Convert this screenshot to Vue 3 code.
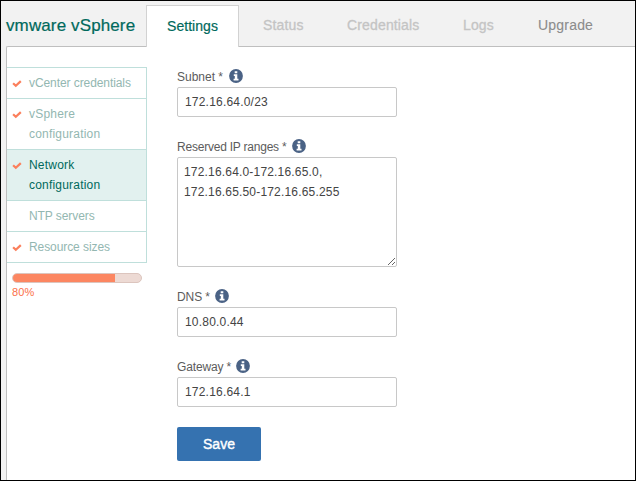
<script setup>
import { ref } from 'vue'

const tabs = [
  { label: 'Settings', state: 'active', key: 'settings' },
  { label: 'Status', state: 'disabled', key: 'status' },
  { label: 'Credentials', state: 'disabled', key: 'credentials' },
  { label: 'Logs', state: 'disabled', key: 'logs' },
  { label: 'Upgrade', state: 'enabled', key: 'upgrade' }
]

const steps = [
  { label: 'vCenter credentials', done: true, tight: true },
  { label: 'vSphere configuration', done: true },
  { label: 'Network configuration', done: true, active: true },
  { label: 'NTP servers', done: false, tight: true },
  { label: 'Resource sizes', done: true, tight: true }
]

const fields = ref([
  { id: 'subnet', label: 'Subnet *', value: '172.16.64.0/23' },
  { id: 'reserved', label: 'Reserved IP ranges *', value: '172.16.64.0-172.16.65.0,\n172.16.65.50-172.16.65.255', multiline: true },
  { id: 'dns', label: 'DNS *', value: '10.80.0.44' },
  { id: 'gateway', label: 'Gateway *', value: '172.16.64.1' }
])

const progress = 80
</script>

<template>
  <div class="frame">
    <header class="topbar">
      <h1 class="brand">vmware vSphere</h1>
      <nav class="tabs">
        <a v-for="tab in tabs" :key="tab.key" class="tab" :class="[tab.state, tab.key]">{{ tab.label }}</a>
      </nav>
    </header>
    <main class="panel">
      <aside class="sidebar">
        <ul class="steps">
          <li v-for="step in steps" :key="step.label" class="step" :class="{ current: step.active }">
            <span class="mark">
              <svg v-if="step.done" width="10" height="8" viewBox="0 0 10 8">
                <path d="M1.1 3.2 3.8 5.8 8.8 1.1" fill="none" stroke="#fb7f5c" stroke-width="2.2" />
              </svg>
            </span>
            <span class="step-label" :class="{ tight: step.tight }">{{ step.label }}</span>
          </li>
        </ul>
        <div class="progress">
          <div class="fill" :style="{ width: progress + '%' }"></div>
        </div>
        <div class="percent">{{ progress }}%</div>
      </aside>
      <form class="form" @submit.prevent>
        <div v-for="field in fields" :key="field.id" class="group">
          <label class="label" :for="field.id">
            <span class="label-text" :class="field.id">{{ field.label }}</span>
            <svg class="info" width="14" height="14" viewBox="0 0 14 14">
              <circle cx="7" cy="7" r="6.9" fill="#4a6285" />
              <path d="M5.7 2.2h2.6v2H5.7zM4.8 5.2h3.5v4.5h1.2v1.8H4.6V9.7h1.2V7H4.8z" fill="#fff" />
            </svg>
          </label>
          <textarea v-if="field.multiline" :id="field.id" v-model="field.value" class="control area" spellcheck="false"></textarea>
          <input v-else :id="field.id" v-model="field.value" class="control" type="text" />
        </div>
        <button class="save" type="submit">Save</button>
      </form>
    </main>
  </div>
</template>

<style>
body {
  margin: 0;
  overflow: hidden;
}
</style>

<style scoped>
* {
  box-sizing: border-box;
}
.frame {
  display: flex;
  flex-direction: column;
  width: 636px;
  height: 481px;
  border: 1px solid #000;
  background: #f2f2f2;
  font-family: "Liberation Sans", Arial, sans-serif;
  color: #5c5c5c;
}
.topbar {
  display: flex;
  flex: none;
  height: 46px;
  padding: 4px 0 0 5px;
}
.brand {
  width: 140px;
  margin: 0;
  padding-top: 10px;
  font-size: 17px;
  font-weight: 400;
  line-height: 22px;
  letter-spacing: 0.12px;
  color: #00695c;
  -webkit-text-stroke: 0.2px #00695c;
  white-space: nowrap;
}
.tabs {
  display: flex;
}
.tab {
  height: 41px;
  padding: 10px 20px 0 24px;
  font-size: 14px;
  line-height: 20px;
  letter-spacing: 0.15px;
  white-space: nowrap;
}
.tab.active {
  position: relative;
  z-index: 1;
  width: 93px;
  height: 42px;
  padding: 10px 0 0 20px;
  border: 1px solid #d2d2d2;
  border-bottom: 0;
  background: #fff;
  color: #00695c;
  letter-spacing: 0.05px;
  -webkit-text-stroke: 0.2px #00695c;
}
.tab.disabled {
  color: #c4c4c4;
  -webkit-text-stroke: 0.3px #c4c4c4;
}
.tab.enabled {
  color: #8c8c8c;
  letter-spacing: 0.2px;
  -webkit-text-stroke: 0.1px #8c8c8c;
}
.tab.status { width: 84px; }
.tab.credentials { width: 116px; }
.tab.logs { width: 75px; }
.panel {
  display: flex;
  flex: 1;
  min-height: 0;
  margin: -1px 0 0 5px;
  border-top: 1px solid #bfbfbf;
  border-left: 1px solid #bfbfbf;
  border-top-left-radius: 2px;
  background: #fff;
}
.sidebar {
  width: 140px;
  padding-top: 20px;
}
.steps {
  margin: 0;
  padding: 0;
  list-style: none;
  border-right: 1px solid #bfdfdb;
  border-bottom: 1px solid #bfdfdb;
}
.step {
  display: flex;
  padding: 5px 0;
  border-top: 1px solid #bfdfdb;
  font-size: 12px;
  line-height: 20px;
  color: #93b7b1;
}
.step.current {
  background: #e2f1ef;
  color: #00695c;
}
.mark {
  display: flex;
  flex: none;
  width: 22px;
  height: 20px;
  padding: 7px 0 0 5px;
}
.step-label {
  width: 112px;
  letter-spacing: 0.2px;
}
.step-label.tight {
  letter-spacing: -0.08px;
  white-space: nowrap;
}
.progress {
  width: 130px;
  height: 10px;
  margin: 10px 0 0 5px;
  border: 1px solid #dcc5be;
  border-radius: 5px;
  background: #eddad4;
  overflow: hidden;
}
.fill {
  height: 100%;
  background: #fc8661;
}
.percent {
  padding-left: 5px;
  font-size: 11px;
  line-height: 18px;
  letter-spacing: 0.15px;
  color: #fb7048;
}
.form {
  padding: 20px 0 0 30px;
}
.group {
  margin-bottom: 20px;
}
.label {
  display: flex;
  height: 20px;
  font-size: 12px;
  line-height: 20px;
  white-space: nowrap;
}
.label-text.subnet { width: 47px; }
.label-text.reserved {
  width: 110px;
  letter-spacing: -0.22px;
}
.label-text.dns {
  width: 33px;
  letter-spacing: -0.1px;
}
.label-text.gateway {
  width: 54px;
  letter-spacing: -0.15px;
}
.info {
  margin: 2px 0 0 5px;
}
.control {
  display: block;
  width: 220px;
  height: 30px;
  margin: 0;
  padding: 0 7px;
  border: 1px solid #c8c8c8;
  border-radius: 2px;
  outline: 0;
  background: #fff;
  font-family: inherit;
  font-size: 12px;
  letter-spacing: 0.2px;
  color: #444;
}
.area {
  height: 110px;
  padding: 4px 6px;
  line-height: 20px;
  letter-spacing: 0.18px;
  resize: both;
}
.save {
  display: block;
  width: 84px;
  height: 34px;
  padding: 0;
  border: 0;
  border-radius: 2px;
  background: #3572b0;
  color: #fff;
  font-family: inherit;
  font-size: 14px;
  -webkit-text-stroke: 0.4px #fff;
}
</style>
